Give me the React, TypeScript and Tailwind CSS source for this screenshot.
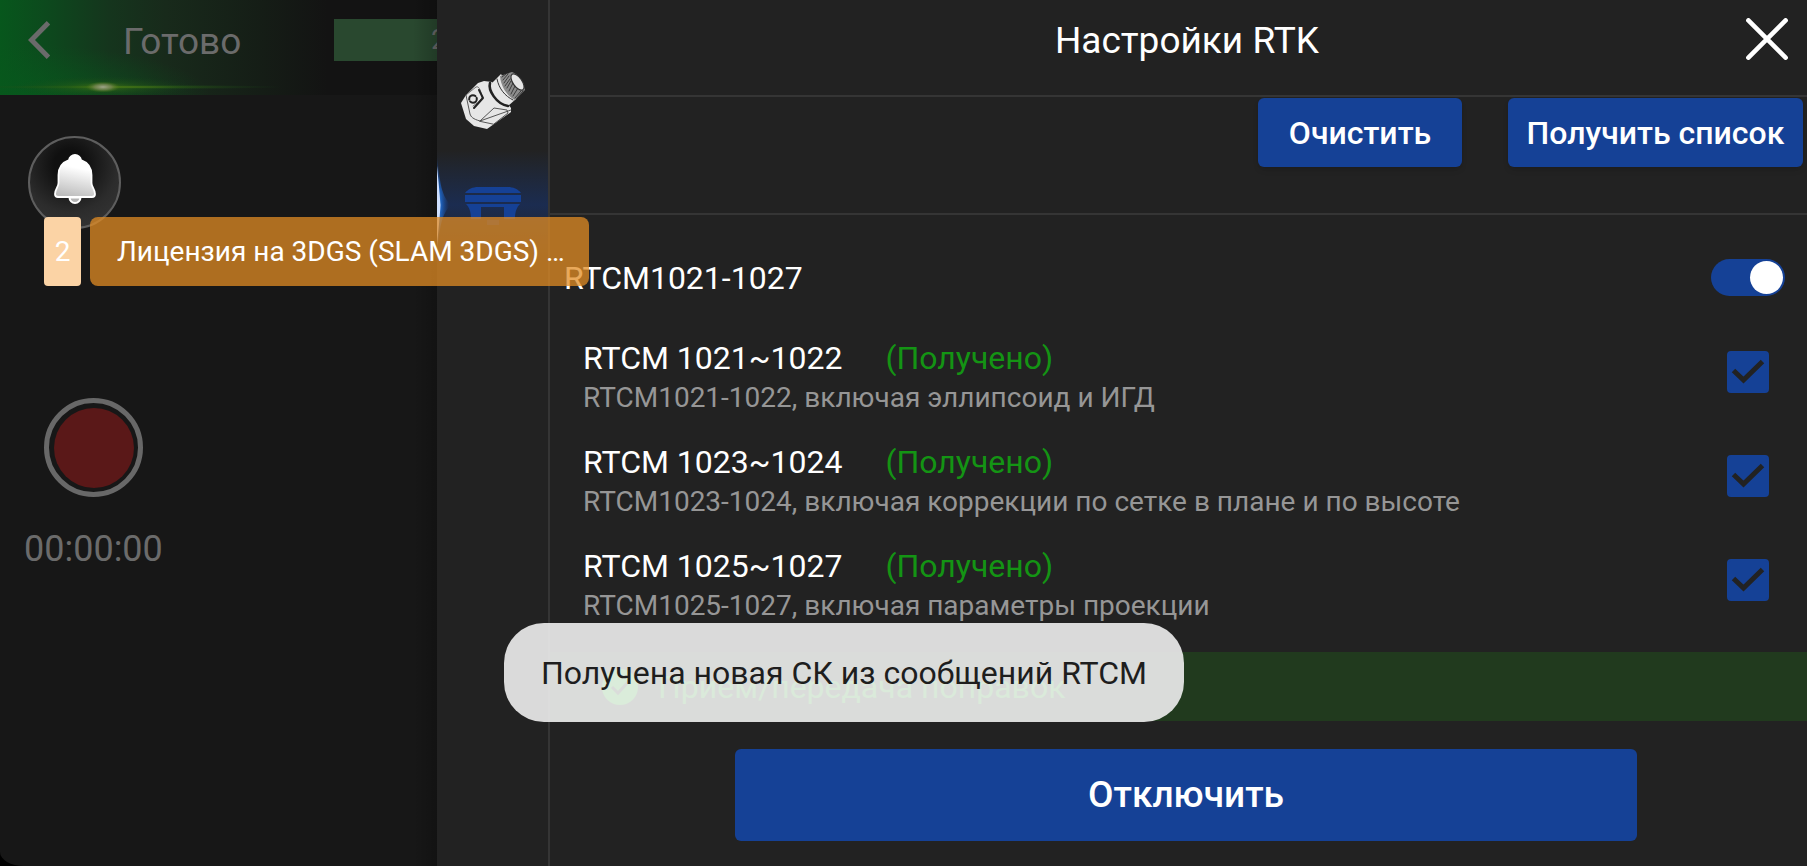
import React, { useState } from "react";

const messages = [
  { id: "m1", title: "RTCM 1021~1022", note: "RTCM1021-1022, включая эллипсоид и ИГД" },
  { id: "m2", title: "RTCM 1023~1024", note: "RTCM1023-1024, включая коррекции по сетке в плане и по высоте" },
  { id: "m3", title: "RTCM 1025~1027", note: "RTCM1025-1027, включая параметры проекции" },
];

function BackIcon() {
  return (
    <svg viewBox="0 0 22 38" className="h-[38px] w-[22px]" fill="none" stroke="#6a6a6a" strokeWidth="5">
      <path d="M20.5 1.8 3.500 19l17 17.2" />
    </svg>
  );
}

function CloseIcon() {
  return (
    <svg viewBox="0 0 42 42" className="h-[42px] w-[42px]" fill="none" stroke="#fff" strokeWidth="4.600" strokeLinecap="round">
      <path d="M2.400 2.400 39.600 39.600M39.600 2.400 2.400 39.600" />
    </svg>
  );
}

function HeaderFlare() {
  return (
    <svg viewBox="0 0 437 95" preserveAspectRatio="none" className="absolute inset-0 h-full w-full">
      <defs>
        <radialGradient id="flareGlow">
          <stop offset="0" stopColor="#5f8a14" stopOpacity="0.9" />
          <stop offset="0.4" stopColor="#2f6414" stopOpacity="0.5" />
          <stop offset="1" stopColor="#17431a" stopOpacity="0" />
        </radialGradient>
        <radialGradient id="flareCore">
          <stop offset="0" stopColor="#a0a58c" />
          <stop offset="0.5" stopColor="#7f8a5a" stopOpacity="0.7" />
          <stop offset="1" stopColor="#4f7a14" stopOpacity="0" />
        </radialGradient>
        <radialGradient id="cornerGlow">
          <stop offset="0" stopColor="#07581c" stopOpacity="0.8" />
          <stop offset="1" stopColor="#07581c" stopOpacity="0" />
        </radialGradient>
      </defs>
      <ellipse cx="20" cy="95" rx="190" ry="50" fill="url(#cornerGlow)" />
      <ellipse cx="103" cy="87" rx="90" ry="11" fill="url(#flareGlow)" opacity="0.7" />
      <ellipse cx="125" cy="87" rx="160" ry="2.500" fill="url(#flareGlow)" />
      <ellipse cx="103" cy="87" rx="17" ry="5.500" fill="url(#flareCore)" />
    </svg>
  );
}

function BellIcon() {
  return (
    <svg viewBox="0 0 42 50" className="h-[50px] w-[42px]">
      <defs>
        <linearGradient id="bell" x1="0.6" y1="0" x2="0.4" y2="1">
          <stop offset="0.3" stopColor="#fff" />
          <stop offset="1" stopColor="#bdbdbd" />
        </linearGradient>
      </defs>
      <path
        d="M21 1a6 6 0 0 0-6 5C8 8.500 4.500 14 4.500 21v8c0 4-3.500 6-3.500 11 0 2 1 3 3 3h34c2 0 3-1 3-3 0-5-3.500-7-3.500-11v-8C37.500 14 34 8.500 27 6a6 6 0 0 0-6-5Z"
        fill="url(#bell)"
        stroke="#fff"
        strokeWidth="1.800"
      />
      <path d="M15.500 43.500a5.500 5.500 0 0 0 11 0Z" fill="#b4b4b4" stroke="#fff" strokeWidth="2" />
    </svg>
  );
}

function ScannerIcon() {
  return (
    <svg viewBox="0 0 66 60" className="h-[60px] w-[66px]" strokeLinejoin="round" strokeLinecap="round">
      <path d="M1 32 6 24l12-12 6-2 8 1 19 26v4L27 58l-13-3-8-7Z" fill="#e6e6e6" />
      <path d="M32 12 41 3l15 25-8 7c-9-2-15-11-16-23Z" fill="#e6e6e6" />
      <path d="M30 12c-2 7 6 21 18 23" fill="none" stroke="#222" strokeWidth="2.600" />
      <path d="M37 8c2 10 8 17 16 21" fill="none" stroke="#333" strokeWidth="1" />
      <path d="M40 5 52 1c6 2 11 10 13 18l-10 10C47 25 41 16 40 5Z" fill="#8c8c8c" />
      <path
        d="m42 6 4-3M43 9l5-6M44 12l5-7M45 15l5-7M47 17l4-7M49 20l4-8M51 23l4-8M53 25l5-8M55 27l6-7M57 27l6-7"
        fill="none"
        stroke="#3c3c3c"
        strokeWidth="1"
      />
      <ellipse cx="57.500" cy="11" rx="4.500" ry="9.500" transform="rotate(-35 57.500 11)" fill="#e6e6e6" stroke="#333" strokeWidth="1.200" />
      <path d="m6 24 4 19c1 3 3 5 10 7l31-11M20 50l14-13 13 2 1 3-14 11Z" fill="none" stroke="#444" strokeWidth="0.900" />
      <path d="m6 24 10-8c3-1 4 2 6 9 1 3-6 8-9 10" fill="none" stroke="#555" strokeWidth="0.800" />
      <circle cx="13" cy="28" r="3.800" fill="none" stroke="#222" strokeWidth="2" strokeDasharray="9 2" />
      <path d="m19 19 4 8-9 10" fill="none" stroke="#222" strokeWidth="2" />
    </svg>
  );
}

function ReceiverIcon() {
  return (
    <svg viewBox="0 0 56 38" className="h-[38px] w-[56px]" fill="#154196">
      <path d="M0 6C3 2 8 0 13 0h30c5 0 10 2 13 6Z" />
      <path d="M0 8h56v7H0Z" />
      <path d="M1 17h54c-3 3-5 7-5 15H39V20H16v12H6C6 24 4 20 1 17Z" />
      <path d="M22 33h12v5H22Z" fillOpacity="0.6" />
    </svg>
  );
}

function EdgeGlow() {
  return (
    <svg viewBox="0 0 14 100" className="absolute left-0 top-1 h-[100px] w-[14px]">
      <defs>
        <radialGradient id="edge" gradientUnits="userSpaceOnUse" cx="0" cy="0" r="1" gradientTransform="translate(0 51) scale(12 48)">
          <stop offset="0" stopColor="#4fa0ff" />
          <stop offset="0.4" stopColor="#1d66c8" stopOpacity="0.8" />
          <stop offset="1" stopColor="#1b4a9a" stopOpacity="0" />
        </radialGradient>
      </defs>
      <path d="M0 0C3 32 5 42 14 51 5 60 3 70 0 100Z" fill="url(#edge)" />
      <path d="M0 12C2 32 3 44 3.500 51 3 60 2 70 0 92Z" fill="#cfe0ff" />
    </svg>
  );
}

function LeftPane() {
  return (
    <section className="relative flex w-[437px] shrink-0 flex-col overflow-hidden rounded-bl-[24px_14px] bg-[#171717]">
      <header className="relative flex h-[95px] shrink-0 bg-[linear-gradient(90deg,#07571c_0%,#0c4a1d_10%,#15351d_25%,#182a1b_38%,#151d16_60%,#131313_75%,#131313_100%)]">
        <HeaderFlare />
        <div className="relative flex h-[80px] w-full items-center">
          <button aria-label="Назад" className="ml-7 shrink-0">
            <BackIcon />
          </button>
          <h2 className="ml-[73px] w-[211px] shrink-0 pt-1 text-[37px] leading-[44px] text-[#6b6b6b]">Готово</h2>
          <div className="flex h-[42px] flex-1 items-center bg-[#29482f] pl-[97px] text-[28px] text-[#6b6b6b]">2</div>
        </div>
      </header>
      <div className="ml-11 mt-[303px] flex flex-col items-start">
        <button
          aria-label="Запись"
          className="flex h-[99px] w-[99px] items-center justify-center rounded-full border-[5px] border-[#686868]"
        >
          <span className="h-20 w-20 rounded-full bg-[#5a1818]" />
        </button>
        <time className="-ml-5 mt-[30px] text-[36px] leading-[44px] text-[#6b6b6b]">00:00:00</time>
      </div>
      <div className="absolute inset-y-0 right-0 w-6 bg-linear-to-r from-transparent to-black/20" />
    </section>
  );
}

function Rail() {
  return (
    <nav aria-label="Разделы" className="flex w-[113px] shrink-0 flex-col border-r-2 border-[#353535] pt-[52px]">
      <button aria-label="Сканер" className="flex h-[98px] items-center justify-center">
        <ScannerIcon />
      </button>
      <button
        aria-label="Приёмник"
        className="relative flex h-[110px] items-start justify-center bg-linear-to-b from-[#222222] via-[#1b2c50] to-[#222222] pt-[37px]"
      >
        <EdgeGlow />
        <ReceiverIcon />
      </button>
    </nav>
  );
}

export default function App() {
  const [enabled, setEnabled] = useState(true);
  return (
    <div className="relative flex min-h-screen bg-black font-['Roboto',sans-serif] text-white">
      <LeftPane />
      <div className="flex min-w-0 flex-1 bg-[#222222]">
        <Rail />
        <main className="flex min-w-0 flex-1 flex-col">
          <header className="flex h-[97px] shrink-0 items-start border-b-2 border-[#353535] pl-[78px] pr-[19px] pt-[18px]">
            <h1 className="flex-1 text-center text-[37px] leading-[46px]">Настройки RTK</h1>
            <button aria-label="Закрыть">
              <CloseIcon />
            </button>
          </header>
          <div className="flex h-[118px] shrink-0 items-start justify-end gap-[46px] border-b-2 border-[#353535] pr-1 pt-px">
            <button className="h-[69px] w-[204px] rounded-md bg-[#154196] text-[32px] font-medium shadow-md">Очистить</button>
            <button className="h-[69px] w-[295px] rounded-md bg-[#154196] text-[32px] font-medium shadow-md">
              Получить список
            </button>
          </div>
          <label className="flex h-[125px] shrink-0 items-center justify-between pl-[14px] pr-[22px] text-[32px]">
            RTCM1021-1027
            <span className="relative flex">
              <input
                type="checkbox"
                role="switch"
                checked={enabled}
                onChange={(e) => setEnabled(e.target.checked)}
                className="peer h-[37px] w-[74px] appearance-none rounded-full bg-neutral-600 checked:bg-[#154196]"
              />
              <span className="pointer-events-none absolute left-[3px] top-[2px] h-[33px] w-[33px] rounded-full bg-white peer-checked:left-[39px]" />
            </span>
          </label>
          <ul className="flex flex-col">
            {messages.map((m) => (
              <li key={m.id} className="flex h-[104px] items-start justify-between pl-[33px] pr-[38px]">
                <label htmlFor={m.id} className="flex flex-col">
                  <span className="flex gap-[43px] text-[32px] leading-[36px]">
                    {m.title}
                    <span className="text-[#149414]">(Получено)</span>
                  </span>
                  <span className="mt-1 text-[28px] leading-[36px] text-[#969696]">{m.note}</span>
                </label>
                <span className="relative mt-[11px] flex">
                  <input
                    id={m.id}
                    type="checkbox"
                    defaultChecked
                    className="peer h-[42px] w-[42px] appearance-none rounded-sm border-2 border-[#154196] checked:bg-[#154196]"
                  />
                  <svg
                    viewBox="0 0 42 42"
                    className="pointer-events-none absolute inset-0 hidden peer-checked:block"
                    fill="none"
                    stroke="#222222"
                    strokeWidth="5"
                  >
                    <path d="m6.500 19.500 10 9.500L35.500 10.500" />
                  </svg>
                </span>
              </li>
            ))}
          </ul>
          <div className="flex h-[69px] shrink-0 items-center gap-5 bg-[#213a1e] pl-[52px] text-[32px] text-[#1ec01e]">
            <svg viewBox="0 0 36 36" className="h-9 w-9">
              <circle cx="18" cy="18" r="18" fill="#20d020" />
              <path d="m10 18 6 6 11-12" fill="none" stroke="#213a1e" strokeWidth="3" />
            </svg>
            <span>Прием/передача поправок</span>
          </div>
          <div className="flex pb-6 pl-[185px] pr-[170px] pt-7">
            <button className="h-[92px] flex-1 rounded-md bg-[#154196] text-[37px] font-medium">Отключить</button>
          </div>
        </main>
      </div>

      <button
        aria-label="Уведомления"
        className="absolute left-7 top-[136px] flex h-[93px] w-[93px] items-center justify-center rounded-full border-2 border-[#5e5e5e] bg-[radial-gradient(circle_at_45%_30%,#101010_20%,#2c2c2c_60%,#383838_100%)] pb-[8px]"
      >
        <BellIcon />
      </button>
      <div className="absolute left-11 top-[217px] flex gap-[9px] text-[28px]">
        <span className="flex h-[69px] w-[37px] items-center justify-center rounded-[4px] bg-[#fbd3a5]">2</span>
        <span className="flex h-[69px] w-[499px] items-center whitespace-nowrap rounded-lg bg-[#e28c24]/75 pl-[27px]">
          Лицензия на 3DGS (SLAM 3DGS) …
        </span>
      </div>

      <div
        role="status"
        className="absolute left-[504px] top-[623px] flex h-[99px] w-[680px] items-center justify-center rounded-[40px] bg-[#eeeeee]/90 text-[32px] text-[#1e1e1e]"
      >
        Получена новая СК из сообщений RTCM
      </div>
    </div>
  );
}
